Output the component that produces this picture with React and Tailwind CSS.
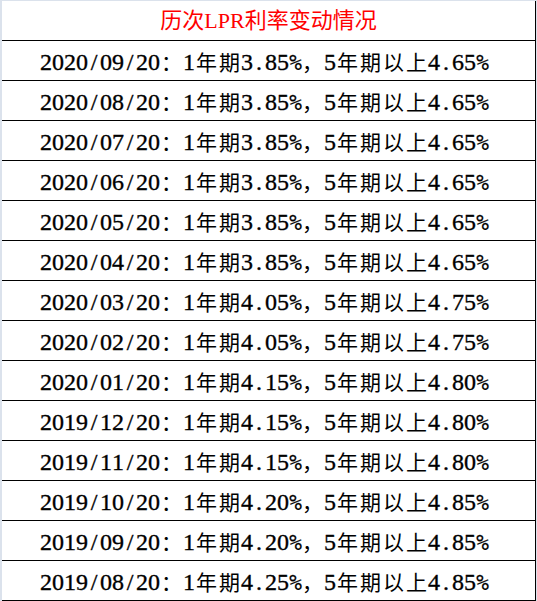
const rows = [
  ["2020/09/20", "3.85", "4.65"],
  ["2020/08/20", "3.85", "4.65"],
  ["2020/07/20", "3.85", "4.65"],
  ["2020/06/20", "3.85", "4.65"],
  ["2020/05/20", "3.85", "4.65"],
  ["2020/04/20", "3.85", "4.65"],
  ["2020/03/20", "4.05", "4.75"],
  ["2020/02/20", "4.05", "4.75"],
  ["2020/01/20", "4.15", "4.80"],
  ["2019/12/20", "4.15", "4.80"],
  ["2019/11/20", "4.15", "4.80"],
  ["2019/10/20", "4.20", "4.85"],
  ["2019/09/20", "4.20", "4.85"],
  ["2019/08/20", "4.25", "4.85"],
];

// SimSun-style layout: half-width ascii cells, full-width CJK cells
const Glyph = ({ ch }) => {
  const wide = /[^\x00-\x7f]/.test(ch);
  if (wide) {
    return (
      <span className="inline-block w-[23px] text-center text-[21px] font-['Noto_Sans_CJK_SC',sans-serif]">
        {ch}
      </span>
    );
  }
  if (ch === "%") {
    return (
      <span className="inline-block w-[12px] text-center text-[21px] tracking-[-1px] font-['DejaVu_Sans_Mono',monospace] [-webkit-text-stroke:0.2px_black]">
        %
      </span>
    );
  }
  return (
    <span className="inline-block w-[12px] text-center [-webkit-text-stroke:0.35px_black]">
      {ch}
    </span>
  );
};

const Line = ({ text }) => (
  <span className="whitespace-nowrap">
    {text.split("").map((ch, i) => (
      <Glyph key={i} ch={ch} />
    ))}
  </span>
);

export default function App() {
  return (
    <div className="w-[537px] h-[601px] bg-white border-t border-l-2 border-r border-[#dbe2ec] font-['Liberation_Serif',serif] text-[24px] text-black leading-none">
      <div className="h-[40px] border-b border-r border-black flex items-center justify-center text-[22px] text-[#ff0000] font-['Liberation_Serif','Noto_Sans_CJK_SC',serif]">
        历次LPR利率变动情况
      </div>
      {rows.map(([date, one, five]) => (
        <div
          key={date}
          className="h-[40px] border-b border-r border-black flex items-center justify-center pt-[3px] pr-[9px]"
        >
          <Line text={`${date}：1年期${one}%，5年期以上${five}%`} />
        </div>
      ))}
    </div>
  );
}
